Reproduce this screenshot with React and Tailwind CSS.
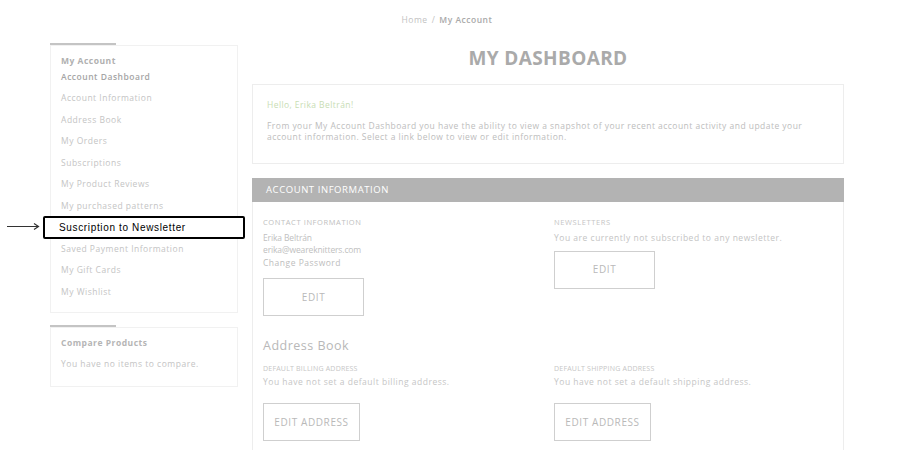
import { useState } from "react";

const links = [
  "Account Information",
  "Address Book",
  "My Orders",
  "Subscriptions",
  "My Product Reviews",
  "My purchased patterns",
  "Suscription to Newsletter",
  "Saved Payment Information",
  "My Gift Cards",
  "My Wishlist",
];

function OutlineButton({ label, className }) {
  return (
    <button
      className={`border border-[#cfcfcf] text-[#b9b9b9] text-[10px] tracking-[0.06em] uppercase bg-white ${className}`}
    >
      {label}
    </button>
  );
}

export default function App() {
  const [active] = useState("Suscription to Newsletter");

  return (
    <div className="w-[900px] h-[450px] bg-white overflow-hidden font-['Open_Sans',sans-serif] relative">
      {/* Breadcrumb */}
      <div className="h-[43px] pt-[14px] text-center text-[8.5px] leading-[12px] tracking-[0.06em] pr-[6px]">
        <span className="text-[#c2c2c2]">Home</span>
        <span className="text-[#c2c2c2] px-[4px]">/</span>
        <span className="text-[#a9a9a9] font-semibold">My Account</span>
      </div>

      <div className="flex gap-[14px] pl-[50px]">
        {/* Sidebar */}
        <aside className="w-[188px] flex flex-col">
          <div className="h-[2px] w-[66px] bg-[#c4c4c4]" />
          <div className="border border-[#f1f1f1] pt-[7px] pb-[10px] px-[10px]">
            <p className="h-[16px] leading-[16px] text-[8.5px] font-bold tracking-[0.06em] text-[#b0b0b0]">My Account</p>
            <p className="h-[16px] leading-[16px] text-[8.5px] font-semibold tracking-[0.06em] text-[#a5a5a5] mb-[2px]">
              Account Dashboard
            </p>
            <ul>
              {links.map((l) =>
                l === active ? (
                  <li key={l} className="relative h-[21.5px] leading-[21.5px]">
                    {/* annotation arrow */}
                    <svg
                      className="absolute left-[-55px] top-[6px]"
                      width="34"
                      height="9"
                      viewBox="0 0 34 9"
                      fill="none"
                      stroke="#333"
                      strokeWidth="1"
                    >
                      <line x1="1" y1="4.5" x2="32" y2="4.5" />
                      <polyline points="28,1.5 32.5,4.5 28,7.5" strokeWidth="1.2" />
                    </svg>
                    <span className="absolute left-[-18px] right-[-18px] top-[0px] h-[23px] border-2 border-black rounded-[2px] bg-white pl-[14px] leading-[19px] text-[10px] tracking-[0.065em] text-black font-['Liberation_Sans',sans-serif]">
                      {l}
                    </span>
                  </li>
                ) : (
                  <li key={l} className="h-[21.5px] leading-[21.5px] text-[8.5px] tracking-[0.06em] text-[#c4c4c4]">
                    {l}
                  </li>
                )
              )}
            </ul>
          </div>

          <div className="h-[2px] w-[66px] bg-[#c4c4c4] mt-[12px]" />
          <div className="border border-[#f1f1f1] pt-[8px] pb-[15px] px-[10px]">
            <p className="h-[14px] leading-[14px] text-[8.5px] font-bold tracking-[0.06em] text-[#b5b5b5]">Compare Products</p>
            <p className="mt-[7px] leading-[14px] text-[8.5px] tracking-[0.06em] text-[#c4c4c4]">
              You have no items to compare.
            </p>
          </div>
        </aside>

        {/* Main */}
        <main className="w-[592px] flex flex-col">
          <h1 className="h-[30px] leading-[30px] text-center text-[19px] font-bold tracking-[0.02em] text-[#aaaaaa]">
            MY DASHBOARD
          </h1>

          <div className="mt-[11px] h-[80px] border border-[#ededed] pl-[14px] pr-[22px] pt-[14px]">
            <p className="leading-[12px] text-[8.5px] tracking-[0.05em] text-[#c8ddb4]">Hello, Erika Beltrán!</p>
            <p className="mt-[9px] leading-[11px] text-[8.5px] tracking-[0.055em] text-[#bdbdbd]">
              From your My Account Dashboard you have the ability to view a snapshot of your recent account activity and update your
              account information. Select a link below to view or edit information.
            </p>
          </div>

          <div className="mt-[14px] h-[24px] bg-[#b3b3b3] px-[14px] leading-[24px] text-[9.5px] tracking-[0.06em] text-white">
            ACCOUNT INFORMATION
          </div>

          <div className="border border-t-0 border-[#ededed] px-[10px] pt-[14px] pb-[20px]">
            <div className="grid grid-cols-2 gap-x-[12px]">
              <div>
                <p className="leading-[12px] text-[7.5px] tracking-[0.08em] text-[#c0c0c0]">CONTACT INFORMATION</p>
                <p className="mt-[4px] leading-[11.5px] text-[8.5px] tracking-[-0.015em] text-[#c0c0c0]">Erika Beltrán</p>
                <p className="leading-[11.5px] text-[8.5px] tracking-[-0.015em] text-[#c0c0c0]">erika@weareknitters.com</p>
                <p className="mt-[1px] leading-[13px] text-[8.5px] tracking-[0.06em] text-[#bdbdbd]">Change Password</p>
                <OutlineButton label="Edit" className="mt-[9px] w-[101px] h-[38px]" />
              </div>
              <div>
                <p className="leading-[12px] text-[7.5px] tracking-[0.08em] text-[#c6c6c6]">NEWSLETTERS</p>
                <p className="mt-[4px] leading-[11.5px] text-[8.5px] tracking-[0.06em] text-[#c4c4c4]">
                  You are currently not subscribed to any newsletter.
                </p>
                <OutlineButton label="Edit" className="mt-[7px] w-[101px] h-[38px]" />
              </div>
            </div>

            <h2 className="mt-[21px] leading-[18px] text-[12.5px] tracking-[0.04em] text-[#b8b8b8]">Address Book</h2>
            <div className="grid grid-cols-2 gap-x-[12px] mt-[8px]">
              <div>
                <p className="leading-[11px] text-[7px] tracking-[0.03em] text-[#c6c6c6]">DEFAULT BILLING ADDRESS</p>
                <p className="mt-[2px] leading-[12px] text-[8.5px] tracking-[0.06em] text-[#c6c6c6]">
                  You have not set a default billing address.
                </p>
                <OutlineButton label="Edit Address" className="mt-[15px] w-[97px] h-[38px]" />
              </div>
              <div>
                <p className="leading-[11px] text-[7px] tracking-[0.03em] text-[#c6c6c6]">DEFAULT SHIPPING ADDRESS</p>
                <p className="mt-[2px] leading-[12px] text-[8.5px] tracking-[0.06em] text-[#c6c6c6]">
                  You have not set a default shipping address.
                </p>
                <OutlineButton label="Edit Address" className="mt-[15px] w-[97px] h-[38px]" />
              </div>
            </div>
          </div>
        </main>
      </div>
    </div>
  );
}
